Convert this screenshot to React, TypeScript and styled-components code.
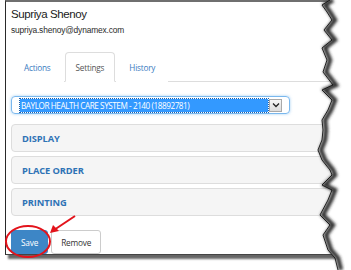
import React from "react";
import styled, { createGlobalStyle } from "styled-components";

const GlobalStyle = createGlobalStyle`
  html, body { margin: 0; padding: 0; background: #ffffff; }
  body { font-family: "Liberation Sans", Arial, sans-serif; }
`;

const Page = styled.div`
  position: relative;
  width: 351px;
  height: 270px;
  overflow: hidden;
  background: #fff;
`;

const Frame = styled.div`
  margin-left: 5px;
  width: 332px;
  height: 255px;
  box-sizing: border-box;
  border-left: 1px solid #2a2a2a;
  border-top: 2px solid #6f6f6f;
  border-bottom: 1px solid #444;
  box-shadow: 3px 4px 2px rgba(0, 0, 0, 0.6);
  padding: 5px 0 0 5px;
  background: #fff;
  display: flex;
  flex-direction: column;
`;

const Name = styled.div`
  font-family: "Liberation Sans", Arial, sans-serif;
  font-size: 11.5px;
  letter-spacing: -0.4px;
  color: #1a1a1a;
  line-height: 14px;
`;

const Email = styled.div`
  font-family: "Liberation Sans", Arial, sans-serif;
  font-size: 8.4px;
  letter-spacing: -0.15px;
  color: #2a2a2a;
  line-height: 10px;
  margin-top: 4px;
`;

const TabBar = styled.div`
  display: flex;
  margin-top: 17px;
  height: 29px;
  border-bottom: 1px solid #dddddd;
`;

const Tab = styled.div<{ $active?: boolean }>`
  font-family: "Open Sans", sans-serif;
  font-size: 8.2px;
  letter-spacing: -0.2px;
  padding: 0 ${(p) => (p.$active ? "10px" : "12px")};
  display: flex;
  align-items: center;
  box-sizing: border-box;
  height: 30px;
  margin-right: 1px;
  color: ${(p) => (p.$active ? "#555" : "#3a7bbf")};
  border: 1px solid ${(p) => (p.$active ? "#dddddd" : "transparent")};
  border-bottom-color: ${(p) => (p.$active ? "#fff" : "transparent")};
  border-radius: 4px 4px 0 0;
  background: #fff;
`;

const SelectBox = styled.div`
  margin-top: 14px;
  width: 279px;
  height: 24px;
  box-sizing: border-box;
  border: 1px solid #7ab8ee;
  border-radius: 4px;
  box-shadow: 0 0 3px rgba(102, 175, 233, 0.6);
  display: flex;
  align-items: center;
  padding: 0 7px 0 8px;
  gap: 1px;
`;

const SelectValue = styled.div`
  flex: 1;
  height: 13px;
  background: #3399ff;
  color: #fff;
  font-family: "Open Sans", sans-serif;
  font-size: 8.2px;
  letter-spacing: -0.45px;
  line-height: 13px;
  padding-left: 1px;
  white-space: nowrap;
  overflow: hidden;
  outline: 1px dotted #1d5fa8;
`;

const DropButton = styled.div`
  width: 13px;
  height: 13px;
  box-sizing: border-box;
  border: 1px solid #a9a9a9;
  background: linear-gradient(#f6f6f6, #dcdcdc);
  display: flex;
  align-items: center;
  justify-content: center;
`;

const Panels = styled.div`
  margin-top: 10px;
  display: flex;
  flex-direction: column;
  gap: 4px;
`;

const Panel = styled.div`
  height: 28px;
  box-sizing: border-box;
  border: 1px solid #dddddd;
  border-radius: 4px;
  background: #f5f5f5;
  display: flex;
  align-items: center;
  padding-left: 10px;
  font-family: "Open Sans", sans-serif;
  font-weight: 700;
  font-size: 9.3px;
  letter-spacing: -0.1px;
  color: #2f73b5;
`;

const ButtonRow = styled.div`
  margin-top: 14px;
  display: flex;
  gap: 3px;
  align-items: flex-start;
`;

const Button = styled.div<{ $primary?: boolean }>`
  height: 24px;
  box-sizing: border-box;
  padding: 0 9px;
  border-radius: 3px;
  display: flex;
  align-items: center;
  font-family: "Open Sans", sans-serif;
  font-size: 8.3px;
  letter-spacing: -0.2px;
  background: ${(p) => (p.$primary ? "#3d86c6" : "#fff")};
  color: ${(p) => (p.$primary ? "#fff" : "#333")};
  border: 1px solid ${(p) => (p.$primary ? "#3d86c6" : "#cccccc")};
`;

const Overlay = styled.svg`
  position: absolute;
  left: 0;
  top: 0;
  pointer-events: none;
`;

const jag: [number, number][] = [
  [330, 0], [322, 5], [327, 12], [332, 20], [324, 30], [332, 40], [322, 48],
  [327, 60], [323, 72], [333, 85], [322, 90], [332, 100], [328, 110],
  [322, 120], [323, 130], [322, 140], [318, 150], [322, 160], [330, 170],
  [332, 175], [322, 185], [332, 190], [328, 200], [320, 215], [330, 225],
  [323, 235], [328, 250], [335, 258], [338, 270],
];

const jagLine = jag.map((p) => p.join(",")).join(" ");
const jagPoly = jagLine + " 351,270 351,0";

export default function App() {
  return (
    <Page>
      <GlobalStyle />
      <Frame>
        <Name>Supriya Shenoy</Name>
        <Email>supriya.shenoy@dynamex.com</Email>
        <TabBar>
          <Tab>Actions</Tab>
          <Tab $active>Settings</Tab>
          <Tab>History</Tab>
        </TabBar>
        <SelectBox>
          <SelectValue>BAYLOR HEALTH CARE SYSTEM - 2140 (18892781)</SelectValue>
          <DropButton>
            <svg width="8" height="6" viewBox="0 0 8 6">
              <path d="M1 1.5 L4 4.5 L7 1.5" fill="none" stroke="#222" strokeWidth="1.3" />
            </svg>
          </DropButton>
        </SelectBox>
        <Panels>
          <Panel>DISPLAY</Panel>
          <Panel>PLACE ORDER</Panel>
          <Panel>PRINTING</Panel>
        </Panels>
        <ButtonRow>
          <Button $primary>Save</Button>
          <Button>Remove</Button>
        </ButtonRow>
      </Frame>
      <Overlay width="351" height="270" viewBox="0 0 351 270">
        <defs>
          <filter id="blur" x="-20%" y="-5%" width="140%" height="110%">
            <feGaussianBlur stdDeviation="1.4" />
          </filter>
        </defs>
        <polygon points={jagPoly} fill="#fff" />
        <polyline
          points={jagLine}
          fill="none"
          stroke="#333"
          strokeWidth="4.5"
          filter="url(#blur)"
          transform="translate(3 0)"
        />
        <polyline points={jagLine} fill="none" stroke="#111" strokeWidth="0.9" />
        <ellipse cx="28" cy="241.5" rx="22" ry="15.5" fill="none" stroke="#e3131b" strokeWidth="2" />
        <line x1="75" y1="216" x2="54" y2="230" stroke="#e3131b" strokeWidth="2" />
        <polygon points="50,233 53,225 59,231" fill="#e3131b" />
      </Overlay>
    </Page>
  );
}
